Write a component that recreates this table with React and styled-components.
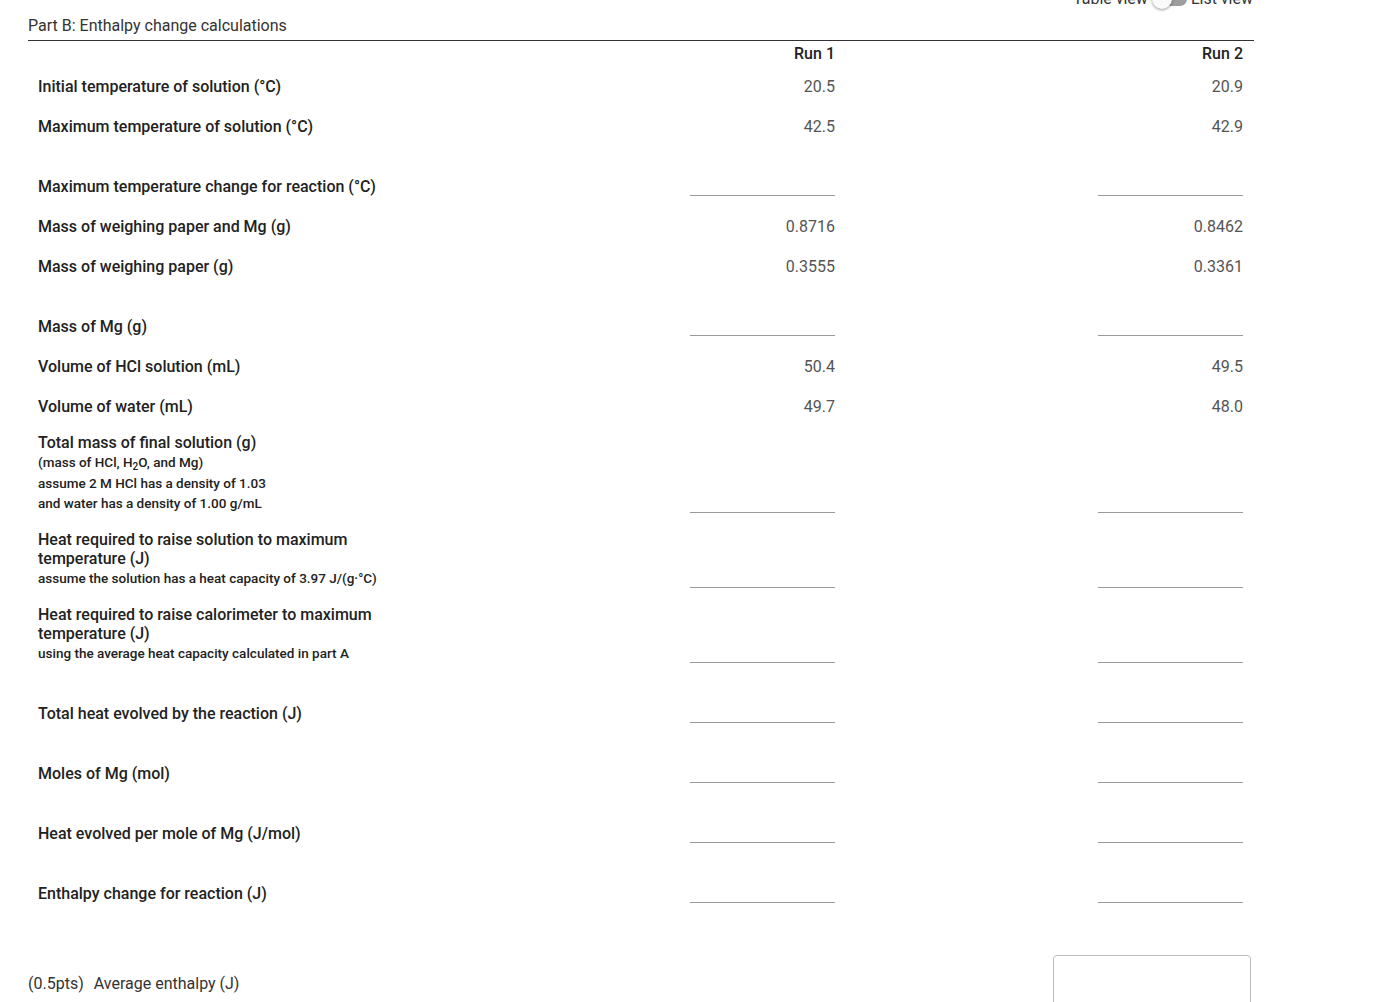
import React from "react";
import styled, { createGlobalStyle } from "styled-components";

const GlobalStyle = createGlobalStyle`
  html, body { margin: 0; padding: 0; background: #fff; }
  body { font-family: Roboto, "Liberation Sans", Arial, sans-serif; color: #333; overflow: hidden; }
  * { box-sizing: border-box; }
`;

const Page = styled.div`
  width: 1379px;
  padding: 0 125px 0 28px;
`;

const Toolbar = styled.div`
  display: flex;
  justify-content: flex-end;
  align-items: center;
  height: 20px;
  margin-top: -11px;
  padding-right: 1px;
  font-size: 16px;
  line-height: 20px;
  color: #333;
`;

const Switch = styled.span`
  position: relative;
  display: inline-block;
  width: 35px;
  height: 20px;
  margin: 0 4px;
  &::before {
    content: "";
    position: absolute;
    left: 7px;
    right: 0;
    top: 3px;
    height: 14px;
    border-radius: 7px;
    background: #9e9e9e;
  }
`;

const Knob = styled.span`
  position: absolute;
  left: 0;
  top: 0;
  width: 20px;
  height: 20px;
  border-radius: 50%;
  background: #fafafa;
  box-shadow: 0 1px 3px rgba(0, 0, 0, 0.4);
`;

const Title = styled.div`
  margin-top: 7px;
  font-size: 16px;
  line-height: 20px;
  padding-bottom: 4px;
  border-bottom: 1px solid #333;
  color: #333;
`;

const Table = styled.div`
  padding-left: 10px;
`;

const Row = styled.div`
  display: grid;
  grid-template-columns: 389px 408px 408px;
  align-items: end;
  min-height: ${(p) => (p.$head ? "25px" : "40px")};
`;

const HeadCell = styled.div`
  grid-column: ${(p) => p.$col};
  text-align: right;
  font-size: 16px;
  font-weight: 500;
  line-height: 20px;
  color: #222;
  padding-bottom: 2px;
`;

const LabelCell = styled.div`
  padding: 7px 0 10px;
  color: #222;
`;

const Main = styled.div`
  font-size: 16px;
  font-weight: 500;
  line-height: 19px;
`;

const Sub = styled.div`
  font-size: 13.5px;
  font-weight: 500;
  line-height: 20px;
  margin-top: ${(p) => p.$gap || 0}px;
  sub { font-size: 10px; line-height: 0; vertical-align: -3px; }
`;

const ValueCell = styled.div`
  text-align: right;
  font-size: 16px;
  line-height: 20px;
  color: #555;
  padding-bottom: 9px;
`;

const InputCell = styled.div`
  display: flex;
  justify-content: flex-end;
  padding: 10px 0;
`;

const AnswerInput = styled.input`
  width: 145px;
  height: 40px;
  border: none;
  border-bottom: 1px solid #9a9a9a;
  outline: none;
  background: transparent;
  font: 16px Roboto, sans-serif;
  text-align: right;
`;

const Footer = styled.div`
  display: flex;
  align-items: center;
  justify-content: space-between;
  margin-top: 42px;
  padding-right: 3px;
  font-size: 16px;
  color: #333;
`;

const Points = styled.span`
  margin-right: 10px;
`;

const AnswerBox = styled.div`
  width: 198px;
  height: 56px;
  border: 1px solid #bdbdbd;
  border-radius: 4px;
`;

const rows = [
  { label: ["Initial temperature of solution (°C)"], v: ["20.5", "20.9"] },
  { label: ["Maximum temperature of solution (°C)"], v: ["42.5", "42.9"] },
  { label: ["Maximum temperature change for reaction (°C)"] },
  { label: ["Mass of weighing paper and Mg (g)"], v: ["0.8716", "0.8462"] },
  { label: ["Mass of weighing paper (g)"], v: ["0.3555", "0.3361"] },
  { label: ["Mass of Mg (g)"] },
  { label: ["Volume of HCl solution (mL)"], v: ["50.4", "49.5"] },
  { label: ["Volume of water (mL)"], v: ["49.7", "48.0"] },
  {
    label: ["Total mass of final solution (g)"],
    subs: [
      [<>(mass of HCl, H<sub>2</sub>O, and Mg)</>, 0],
      ["assume 2 M HCl has a density of 1.03", 1],
      ["and water has a density of 1.00 g/mL", 0],
    ],
  },
  {
    label: ["Heat required to raise solution to maximum", "temperature (J)"],
    subs: [["assume the solution has a heat capacity of 3.97 J/(g·°C)", 0]],
  },
  {
    label: ["Heat required to raise calorimeter to maximum", "temperature (J)"],
    subs: [["using the average heat capacity calculated in part A", 0]],
  },
  { label: ["Total heat evolved by the reaction (J)"] },
  { label: ["Moles of Mg (mol)"] },
  { label: ["Heat evolved per mole of Mg (J/mol)"] },
  { label: ["Enthalpy change for reaction (J)"] },
];

export default function App() {
  return (
    <>
      <GlobalStyle />
      <Page>
        <Toolbar>
          <span>Table view</span>
          <Switch>
            <Knob />
          </Switch>
          <span>List view</span>
        </Toolbar>
        <Title>Part B: Enthalpy change calculations</Title>
        <Table>
          <Row $head>
            <HeadCell $col={2}>Run 1</HeadCell>
            <HeadCell $col={3}>Run 2</HeadCell>
          </Row>
          {rows.map((r, i) => (
            <Row key={i}>
              <LabelCell>
                {r.label.map((l, j) => (
                  <Main key={j}>{l}</Main>
                ))}
                {r.subs &&
                  r.subs.map(([s, g], j) => (
                    <Sub key={j} $gap={g}>
                      {s}
                    </Sub>
                  ))}
              </LabelCell>
              {r.v ? (
                <>
                  <ValueCell>{r.v[0]}</ValueCell>
                  <ValueCell>{r.v[1]}</ValueCell>
                </>
              ) : (
                <>
                  <InputCell>
                    <AnswerInput type="text" />
                  </InputCell>
                  <InputCell>
                    <AnswerInput type="text" />
                  </InputCell>
                </>
              )}
            </Row>
          ))}
        </Table>
        <Footer>
          <span>
            <Points>(0.5pts)</Points>Average enthalpy (J)
          </span>
          <AnswerBox />
        </Footer>
      </Page>
    </>
  );
}
